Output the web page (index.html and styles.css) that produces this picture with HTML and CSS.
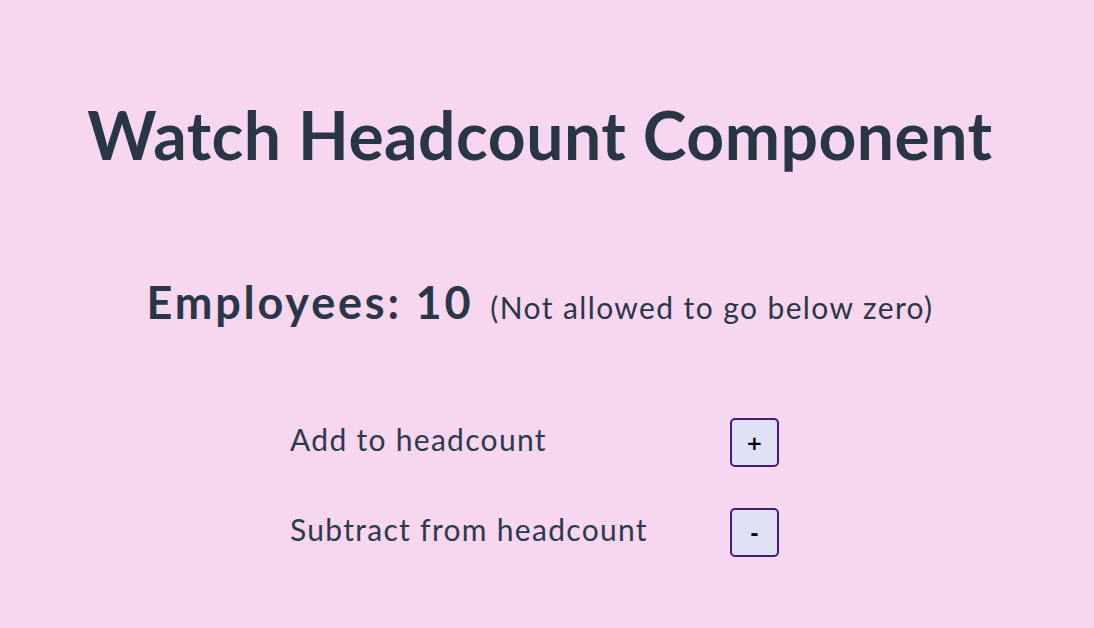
FILE: index.html
```html
<!DOCTYPE html>
<html lang="en">
<head>
    <meta charset="UTF-8">
    <title>Watch Headcount Component</title>
    <link rel="stylesheet" href="styles.css">
</head>
<body>
<div class="container">
    <h1 class="title">Watch Headcount Component</h1>
    <div class="count-line">
        <span class="count">Employees: <span id="count">10</span></span>
        <span class="note">(Not allowed to go below zero)</span>
    </div>
    <table class="controls">
        <tr>
            <td class="label">Add to headcount</td>
            <td class="action"><button onclick="change(1)">+</button></td>
        </tr>
        <tr>
            <td class="label">Subtract from headcount</td>
            <td class="action"><button onclick="change(-1)">-</button></td>
        </tr>
    </table>
</div>

<script>
    var headcount = 10;

    function change(step) {
        // never go below zero
        if (headcount + step < 0) {
            return;
        }
        headcount = headcount + step;
        document.getElementById('count').textContent = headcount;
    }
</script>
</body>
</html>
```

FILE: styles.css
```css
body, html {
    height: 100%;
    margin: 0;
    font-family: Lato, "Open Sans", sans-serif;
    background: #f7d6f0;
    color: #2a3748;
}
.container {
    padding: 95px 14px 0 0;
    text-align: center;
}
.title {
    margin: 0;
    font-size: 66px;
    line-height: 80px;
    font-weight: 700;
    letter-spacing: 0.5px;
    color: #283646;
}
.count-line {
    margin-top: 100px;
    font-size: 45px;
    line-height: 54px;
    font-weight: 700;
}
.count {
    letter-spacing: 2.8px;
}
.note {
    margin-left: 6px;
    font-size: 30px;
    line-height: 1;
    font-weight: 400;
    letter-spacing: 1.4px;
}
.controls {
    margin: 89px auto 0;
    border-collapse: collapse;
}
.controls td {
    padding: 0 0 41px;
    text-align: left;
    vertical-align: top;
}
.label {
    width: 440px;
    font-size: 30px;
    line-height: 43px;
    font-weight: 400;
    letter-spacing: 1.3px;
    color: #2c3a4d;
}
.action {
    width: 60px;
}
button {
    display: block;
    width: 49px;
    height: 49px;
    padding: 0;
    border: 2px solid #3f1d78;
    border-radius: 5px;
    background: #e1e1f6;
    color: #000;
    font-family: "DejaVu Sans", sans-serif;
    font-size: 20px;
    font-weight: 700;
    cursor: pointer;
}
```
